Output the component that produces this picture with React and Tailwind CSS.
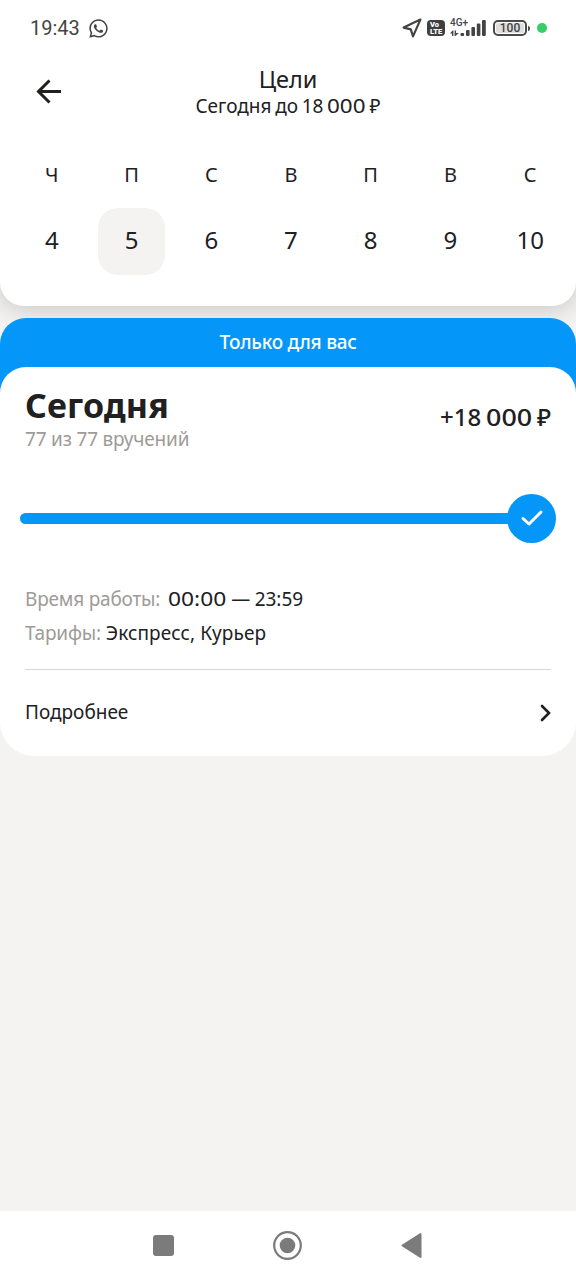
import React from "react";
import { FaWhatsapp } from "react-icons/fa";

const days = [
  { id: 4, name: "Ч" },
  { id: 5, name: "П" },
  { id: 6, name: "С" },
  { id: 7, name: "В" },
  { id: 8, name: "П" },
  { id: 9, name: "В" },
  { id: 10, name: "С" },
];

const StatusBar = () => {
  return (
    <div className="h-14 pl-[30px] pr-[29px] flex items-center justify-between text-[#444444]">
      <div className="flex items-center gap-[8px]">
        <span className="font-[Roboto,sans-serif] text-[20px] leading-6">19:43</span>
        <FaWhatsapp className="w-[21px] h-[21px]" />
      </div>

      <div className="flex items-center">
        <svg width="20" height="20" viewBox="0 0 20 20" fill="none">
          <path d="M18.4 1.6L1.6 9.6L8.8 11.4L11 18.4L18.4 1.6Z" stroke="currentColor" strokeWidth="2.2" strokeLinejoin="round" />
        </svg>
        <div className="ml-[5px] w-[18px] h-4 rounded-[4px] bg-[#3f3f3f] text-white font-[Roboto,sans-serif] font-black text-[7.5px] leading-[7px] flex flex-col justify-center">
          <span className="pl-[3px]">Vo</span>
          <span className="text-center">LTE</span>
        </div>
        <div className="ml-[5px] w-9 h-[18px] relative">
          <span className="absolute left-0 -top-px font-[Roboto,sans-serif] font-medium text-[10px] leading-[10px]">4G+</span>
          <svg width="36" height="18" viewBox="0 0 36 18" fill="currentColor">
            <path d="M0 14.5L2.6 11.5H3.4V17H2V14.5Z M4.6 11.5H6V14H8.8L5.4 17H4.6Z" />
            <rect x="10.5" y="14" width="3.6" height="3" rx="1" />
            <rect x="16" y="11" width="3.6" height="6" rx="1" />
            <rect x="21.4" y="8" width="3.6" height="9" rx="1" />
            <rect x="26.8" y="4.5" width="3.6" height="12.5" rx="1" />
            <rect x="32" y="1" width="3.8" height="16" rx="1" />
          </svg>
        </div>
        <div className="ml-[7px] w-[34px] h-4 rounded-[5px] border-2 border-[#4a4a4a] p-px flex">
          <span className="flex-1 rounded-[2px] bg-[#dedede] text-center font-[Roboto,sans-serif] font-medium text-[12px] leading-[11px]">100</span>
        </div>
        <span className="ml-px w-[2px] h-[5px] rounded-r bg-[#4a4a4a]"></span>
        <span className="ml-[7px] w-[10px] h-[10px] rounded-full bg-[#34cf69]"></span>
      </div>
    </div>
  );
};

const Header = () => {
  return (
    <header className="h-[306px] bg-white rounded-b-[24px] shadow-[0_4px_24px_rgba(0,0,0,0.18)]">
      <StatusBar />

      <div className="h-[94px] pt-[10px] px-9 grid grid-cols-[40px_1fr_40px]">
        <svg className="mt-[13px]" width="26" height="26" viewBox="0 0 26 26" fill="none">
          <path d="M25 12.5H2.5M13.5 1.5L2.5 12.5L13.5 23.5" stroke="#21201f" strokeWidth="3" />
        </svg>
        <div className="text-center">
          <h1 className="text-[23.5px] leading-[26px]">Цели</h1>
          <p className="text-[19px] leading-6 mt-[2px] [word-spacing:-1.2px]">
            Сегодня до 18 <span className="inline-block origin-left scale-x-[1.18] mr-[6px]">000</span> ₽
          </p>
        </div>
      </div>

      <div className="ml-3 w-[558px] pt-[13px] grid grid-cols-7">
        {days.map((day) => (
          <div key={day.id} className="flex flex-col items-center">
            <span className="text-[20px] leading-6">{day.name}</span>
            <span
              className={
                day.id === 5
                  ? "mt-[21px] w-[67px] h-[67px] rounded-[20px] text-center text-[24px] leading-[64px] bg-[#f4f3f2]"
                  : "mt-[21px] w-[67px] h-[67px] text-center text-[24px] leading-[64px]"
              }
            >
              {day.id}
            </span>
          </div>
        ))}
      </div>
    </header>
  );
};

const GoalCard = () => {
  return (
    <section className="mt-3 bg-[linear-gradient(#0596fa_0_120px,transparent_120px)] rounded-t-[26px]">
      <div className="h-[49px] text-center text-white font-medium text-[19px] leading-[48px] tracking-[-0.25px]">Только для вас</div>

      <div className="h-[389px] bg-white rounded-t-[26px] rounded-b-[34px] px-[25px]">
        <div className="h-[126px] flex justify-between">
          <div className="pt-[19px]">
            <h2 className="font-bold text-[34px] leading-[38px] tracking-[0.15px]">Сегодня</h2>
            <p className="mt-[3px] text-[19px] leading-6 tracking-[-0.2px] text-[#9e9b98]">77 из 77 вручений</p>
          </div>
          <span className="pt-[34px] font-medium text-[24px] leading-8 [word-spacing:-1.5px]">
            +18 <span className="inline-block origin-left scale-x-[1.12] mr-[5px]">000</span> ₽
          </span>
        </div>

        <div className="-mx-[5px] h-[50px] flex items-center">
          <div className="flex-1 h-[11px] bg-[#0596fa] rounded-l-full"></div>
          <div className="-ml-1 w-[49px] h-[49px] rounded-full bg-[#0596fa] flex items-center justify-center">
            <svg width="24" height="20" viewBox="0 0 24 20" fill="none">
              <path d="M3 10.5L9 16L21 4" stroke="#fff" strokeWidth="3" strokeLinecap="round" strokeLinejoin="round" />
            </svg>
          </div>
        </div>

        <div className="h-[127px] pt-[39px] border-b border-[#d8d7d6] text-[19px] leading-[34px]">
          <p>
            <span className="text-[#9e9b98] tracking-[-0.2px]">Время работы:</span>
            <span className="ml-2 [word-spacing:-0.5px]">
              <span className="inline-block origin-left scale-x-[1.2] mr-[10px]">00:00</span> — 23:59
            </span>
          </p>
          <p>
            <span className="text-[#9e9b98] tracking-[-0.2px]">Тарифы:</span> <span className="tracking-[0.1px]">Экспресс, Курьер</span>
          </p>
        </div>

        <div className="h-[86px] flex items-center justify-between text-[19px]">
          <span className="leading-6 pb-[2px]">Подробнее</span>
          <svg width="12" height="18" viewBox="0 0 12 18" fill="none">
            <path d="M3 2L10 9L3 16" stroke="#21201f" strokeWidth="2.6" strokeLinecap="round" />
          </svg>
        </div>
      </div>
    </section>
  );
};

const NavBar = () => {
  return (
    <nav className="mt-auto h-[69px] bg-white">
      <svg width="576" height="69" viewBox="0 0 576 69" fill="#7b7b7b">
        <rect x="153" y="24" width="21" height="21" rx="3" />
        <circle cx="287.5" cy="34.5" r="13.3" fill="none" stroke="#7b7b7b" strokeWidth="2.2" />
        <circle cx="287.5" cy="34.5" r="7.8" />
        <path d="M402.5 34.5L420.5 23V46Z" stroke="#7b7b7b" strokeWidth="2" strokeLinejoin="round" />
      </svg>
    </nav>
  );
};

const App = () => {
  return (
    <div className="w-[576px] h-[1280px] flex flex-col overflow-hidden bg-[#f4f3f2] text-[#21201f] font-['Noto_Sans','Open_Sans',sans-serif]">
      <Header />
      <GoalCard />
      <NavBar />
    </div>
  );
};

export default App;
